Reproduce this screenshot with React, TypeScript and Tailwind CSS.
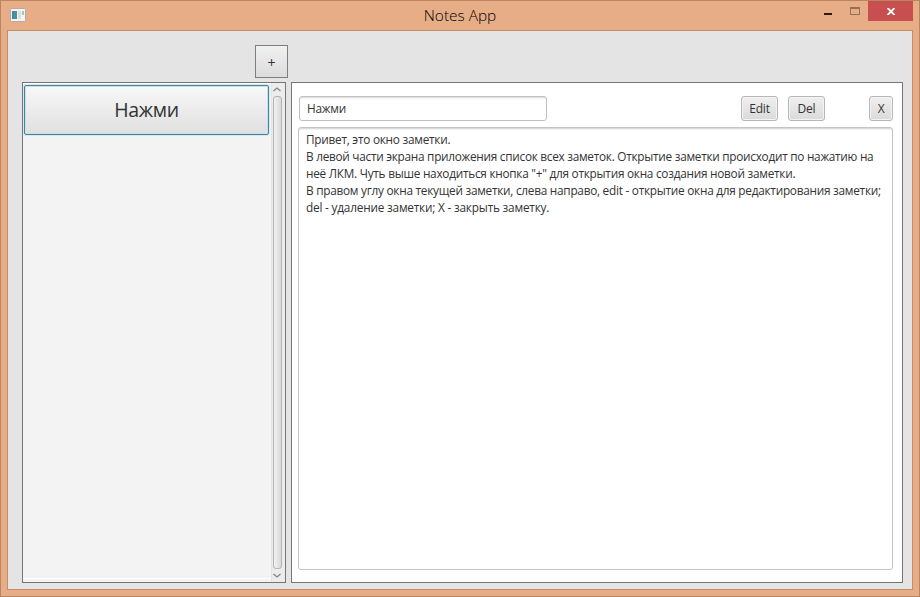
import type { ReactNode } from "react";

const note = {
  title: "Нажми",
  lines: [
    { text: "Привет, это окно заметки.", spacing: "tracking-[-0.25px]" },
    { text: "В левой части экрана приложения список всех заметок. Открытие заметки происходит по нажатию на", spacing: "tracking-[-0.27px]" },
    { text: "неё ЛКМ. Чуть выше находиться кнопка \"+\" для открытия окна создания новой заметки.", spacing: "tracking-[-0.255px]" },
    { text: "В правом углу окна текущей заметки, слева направо, edit - открытие окна для редактирования заметки;", spacing: "tracking-[-0.255px]" },
    { text: "del - удаление заметки; X - закрыть заметку.", spacing: "tracking-[-0.2px]" },
  ],
};

function TitleBar() {
  return (
    <header className="grid h-[29px] shrink-0 grid-cols-[1fr_auto_1fr] text-[#2a1c12]">
      <div className="pl-[9px] pt-[7px]">
        <svg width="16" height="14" viewBox="0 0 16 14">
          <rect x="0.5" y="0.5" width="15" height="13" rx="1" fill="#f4f3f1" stroke="#b3aaa5" />
          <rect x="2" y="3" width="5" height="8" fill="#4d9396" />
          <rect x="2" y="3" width="2" height="8" fill="#4779a0" opacity="0.6" />
          <rect x="8" y="3" width="3" height="8" fill="#dcdede" />
          <rect x="12" y="3" width="2" height="4" fill="#9cc9bb" />
        </svg>
      </div>
      <h1 className="pt-[3px] text-[15.4px] font-light leading-[24px] text-black">Notes App</h1>
      <div className="flex justify-end pr-[6px]">
        <button className="mr-[8px] mt-[12px] h-[2px] w-[8px] bg-[#2a1a10]" aria-label="Minimize" />
        <button className="ml-[10px] mr-[8px] mt-[6px] h-[8px] w-[10px] border border-t-2 border-[#977053]" aria-label="Maximize" />
        <button className="flex h-[20px] w-[45px] items-center justify-center bg-[#c84f50]" aria-label="Close">
          <svg width="8" height="7" viewBox="0 0 8 7" className="mt-[1px]">
            <path d="M0.5 0L7.5 7M7.5 0L0.5 7" stroke="#fff" strokeWidth="1.9" />
          </svg>
        </button>
      </div>
    </header>
  );
}

function SmallButton({ children, className }: { children: ReactNode; className: string }) {
  return (
    <button className={`h-[25px] rounded-[3px] border border-[#b6b6b6] bg-linear-to-b from-[#efefef] to-[#dadada] pt-px text-[12px] leading-none tracking-[-0.2px] shadow-[inset_0_0_0_1px_#f3f3f3] ${className}`}>
      {children}
    </button>
  );
}

function Sidebar() {
  return (
    <aside className="flex w-[264px] border border-[#74767a] bg-[#f3f3f3]">
      <div className="min-w-0 flex-1 pb-[3px]">
        <div className="h-full border-y border-white pl-px pt-px">
          <button className="h-[50px] w-[245px] rounded-[2px] border border-[#4f8196] bg-linear-to-b from-[#f8f8f8] to-[#e0e0e0] text-[19.5px] leading-none tracking-[-0.3px] shadow-[inset_0_0_0_1px_#c6e3ec,0_0_0_1px_#d3eaf1]">
            {note.title}
          </button>
        </div>
      </div>
      <div className="flex w-[14px] flex-col items-center border-l border-[#e4e4e4] bg-[#ececec] pr-[3px]">
        <svg width="8" height="5" viewBox="0 0 8 5" className="mb-[4px] mt-[4px] shrink-0">
          <path d="M0.5 4L4 1L7.5 4" fill="none" stroke="#858585" strokeWidth="1.3" />
        </svg>
        <div className="w-[9px] flex-1 rounded-[3px] border border-[#b4b4b4] bg-linear-to-r from-[#f2f2f2] to-[#d9d9d9]" />
        <svg width="8" height="5" viewBox="0 0 8 5" className="mb-[4px] mt-[4px] shrink-0">
          <path d="M0.5 1L4 4L7.5 1" fill="none" stroke="#858585" strokeWidth="1.3" />
        </svg>
      </div>
    </aside>
  );
}

function NotePanel() {
  return (
    <main className="flex w-[612px] flex-col border border-[#74767a] bg-white px-[6px] pb-[12px] pt-[13px]">
      <div className="flex pl-px">
        <input
          readOnly
          value={note.title}
          className="mr-[194px] h-[25px] w-[248px] rounded-[3px] border border-[#c0c0c0] bg-white px-[7px] pb-px text-[11.8px] tracking-[-0.2px] shadow-[inset_0_2px_2px_-1px_#d8d8d8] outline-none"
        />
        <SmallButton className="w-[37px]">Edit</SmallButton>
        <SmallButton className="ml-[10px] w-[37px]">Del</SmallButton>
        <SmallButton className="ml-[44px] w-[24px]">X</SmallButton>
      </div>
      <article className="mt-[6px] w-[595px] flex-1 rounded-[3px] border border-[#c4c4c4] pl-[7px] pt-[3px] text-[11.8px] leading-[17px] shadow-[inset_0_2px_2px_-1px_#d0d0d0]">
        {note.lines.map((line) => (
          <p key={line.text} className={`whitespace-nowrap ${line.spacing}`}>
            {line.text}
          </p>
        ))}
      </article>
    </main>
  );
}

export default function App() {
  return (
    <div className="flex h-[597px] w-[920px] flex-col border border-[#bc8561] bg-[#e6ad87] px-[6px] pb-[6px] font-['Open_Sans','Noto_Sans',sans-serif] text-[#333333]">
      <div className="-mx-[6px]">
        <TitleBar />
      </div>
      <div className="flex flex-1 flex-col border border-[#c28d69] bg-[#e4e4e4] pl-[14px] pt-[14px]">
        <button className="mb-[4px] ml-[233px] h-[33px] w-[33px] shrink-0 border border-[#7d7e81] bg-linear-to-b from-[#f1f1f1] to-[#dcdcdc] pt-[2px] text-[14px] leading-none">
          +
        </button>
        <div className="flex h-[501px] gap-[5px]">
          <Sidebar />
          <NotePanel />
        </div>
      </div>
    </div>
  );
}
